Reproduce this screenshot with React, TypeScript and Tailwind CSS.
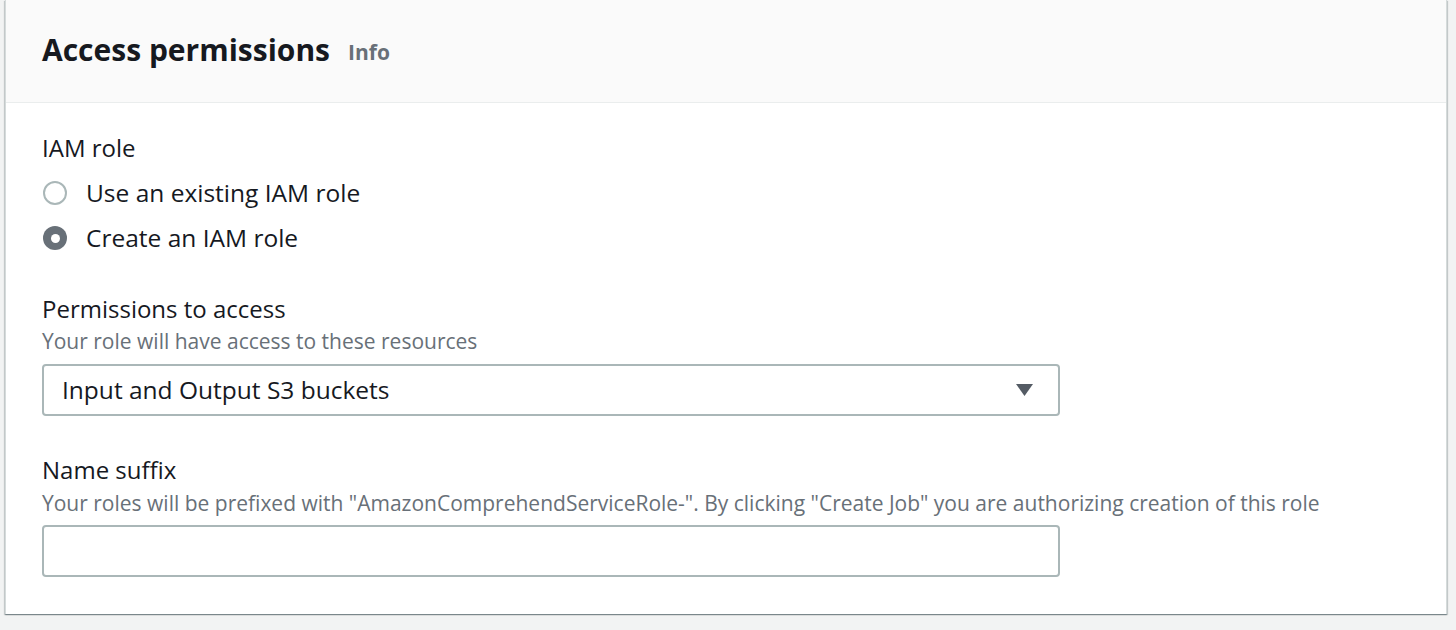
export default function App() {
  return (
    <div className="min-h-screen bg-[#f2f3f3] font-['Open_Sans',sans-serif] text-[#16191f]">
      <div className="ml-[5px] w-[1442px] bg-white border-l border-r border-[#d5dbdb] shadow-[0_1px_1px_0_rgba(0,28,36,0.3),1px_1px_1px_0_rgba(0,28,36,0.15),-1px_1px_1px_0_rgba(0,28,36,0.15)]">
        <div className="h-[103px] bg-[#fafafa] border-b border-[#eaeded] px-[36px] flex items-center">
          <h2 className="text-[30px] font-bold leading-[36px] pb-[2px]">Access permissions</h2>
          <span className="ml-[18px] text-[21px] font-bold text-[#687078] pt-[4px]">Info</span>
        </div>

        <div className="px-[36px] pt-[31px] pb-[37px]">
          <div className="text-[24px] leading-[28px]">IAM role</div>
          <div className="mt-[11px] flex flex-col gap-[5px]">
            <label className="h-[40px] flex items-center gap-[19px] text-[24.5px] leading-[28px]">
              <span className="ml-[1px] w-[24px] h-[24px] rounded-full border-2 border-[#aab7b8] bg-white" />
              <span>Use an existing IAM role</span>
            </label>
            <label className="h-[40px] flex items-center gap-[19px] text-[24.5px] leading-[28px]">
              <span className="ml-[1px] w-[24px] h-[24px] rounded-full bg-[#687078] flex items-center justify-center">
                <span className="w-[9px] h-[9px] rounded-full bg-white" />
              </span>
              <span>Create an IAM role</span>
            </label>
          </div>

          <div className="mt-[37px] text-[24px] leading-[28px]">Permissions to access</div>
          <div className="mt-[6px] text-[21px] leading-[24px] text-[#687078]">Your role will have access to these resources</div>
          <div className="mt-[11px] w-[1018px] h-[52px] border-2 border-[#aab7b8] rounded-[4px] flex items-center justify-between pl-[18px] pr-[25px]">
            <span className="text-[24.5px] leading-[28px]">Input and Output S3 buckets</span>
            <svg width="17" height="12" viewBox="0 0 17 12">
              <path d="M0 0 H17 L8.5 12 Z" fill="#545b64" />
            </svg>
          </div>

          <div className="mt-[40px] text-[24px] leading-[28px]">Name suffix</div>
          <div className="mt-[7px] text-[21px] leading-[24px] text-[#687078]">
            Your roles will be prefixed with "AmazonComprehendServiceRole-". By clicking "Create Job" you are authorizing creation of this role
          </div>
          <div className="mt-[10px] w-[1018px] h-[52px] border-2 border-[#aab7b8] rounded-[4px] bg-white" />
        </div>
      </div>
    </div>
  );
}
